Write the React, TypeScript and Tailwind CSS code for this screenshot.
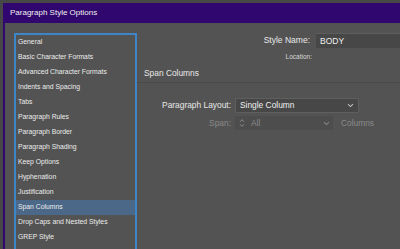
import React from "react";

const items = [
  "General",
  "Basic Character Formats",
  "Advanced Character Formats",
  "Indents and Spacing",
  "Tabs",
  "Paragraph Rules",
  "Paragraph Border",
  "Paragraph Shading",
  "Keep Options",
  "Hyphenation",
  "Justification",
  "Span Columns",
  "Drop Caps and Nested Styles",
  "GREP Style",
];

function Chevron({ color }: { color: string }) {
  return (
    <svg width="7" height="5" viewBox="0 0 7 5" className="shrink-0">
      <path d="M1 1.2 L3.5 3.6 L6 1.2" fill="none" stroke={color} strokeWidth="1.1" />
    </svg>
  );
}

function Spinner() {
  return (
    <svg width="6" height="10" viewBox="0 0 6 10" className="shrink-0">
      <path d="M1 3.8 L3 1.6 L5 3.8" fill="none" stroke="#8a8a8a" strokeWidth="1" />
      <path d="M1 6.2 L3 8.4 L5 6.2" fill="none" stroke="#8a8a8a" strokeWidth="1" />
    </svg>
  );
}

export default function App() {
  return (
    <div
      className="w-[400px] h-[249px] bg-[#474747] pt-[3px] pl-[3px] overflow-hidden"
      style={{ fontFamily: '"Liberation Sans", Arial, sans-serif' }}
    >
      <div className="flex flex-col h-full border-l-2 border-[#30076f]">
        <div className="h-[20px] shrink-0 bg-[#30076f] flex items-center pl-[5px] text-[8px] text-[#f0f0f0]">
          Paragraph Style Options
        </div>
        <div className="flex-1 bg-[#535353] flex">
          <div className="pl-[9px] pt-[10px] shrink-0">
            <div className="w-[123px] h-[260px] border-2 border-[#3e85c8] flex flex-col">
              {items.map((it) => (
                <div
                  key={it}
                  className={
                    "h-[15px] shrink-0 flex items-center pl-[2px] text-[6.8px] text-[#ececec] " +
                    (it === "Span Columns" ? "bg-[#4b6888]" : "")
                  }
                >
                  {it}
                </div>
              ))}
            </div>
          </div>
          <div className="flex-1 flex flex-col min-w-0">
            <div className="mt-[10px] h-[15px] flex items-center">
              <div className="w-[173px] shrink-0 text-right text-[8.5px] text-[#e8e8e8]">Style Name:</div>
              <div className="ml-[6px] flex-1 h-[15px] bg-[#474747] border-t border-[#5d5d5d] flex items-center pl-[4px] text-[8.5px] text-[#f0f0f0]">
                BODY
              </div>
            </div>
            <div className="mt-[4px] h-[10px] flex items-center">
              <div className="w-[175px] shrink-0 text-right text-[6.5px] text-[#d8d8d8]">Location:</div>
            </div>
            <div className="mt-[5px] h-[12px] flex items-center pl-[7px] text-[8.4px] text-[#e8e8e8]">
              Span Columns
            </div>
            <div className="mt-[3px] h-px bg-[#4a4a4a]" />
            <div className="mt-[15px] h-[15px] flex items-center">
              <div className="w-[94px] shrink-0 text-right text-[8.4px] text-[#e8e8e8]">Paragraph Layout:</div>
              <div className="ml-[4px] w-[124px] h-[15px] bg-[#474747] border border-[#5f5f5f] rounded-[1px] flex items-center pl-[4px] pr-[4px] text-[8.4px] text-[#f0f0f0]">
                <span className="flex-1">Single Column</span>
                <Chevron color="#bdbdbd" />
              </div>
            </div>
            <div className="mt-[3px] h-[14px] flex items-center">
              <div className="w-[94px] shrink-0 text-right text-[8.4px] text-[#8a8a8a]">Span:</div>
              <div className="ml-[4px] w-[98px] h-[14px] bg-[#4d4d4d] flex items-center pl-[4px] pr-[3px] text-[8.4px] text-[#8c8c8c]">
                <Spinner />
                <span className="ml-[6px] flex-1">All</span>
                <Chevron color="#858585" />
              </div>
              <div className="ml-[8px] text-[8.4px] text-[#8a8a8a]">Columns</div>
            </div>
          </div>
        </div>
      </div>
    </div>
  );
}
